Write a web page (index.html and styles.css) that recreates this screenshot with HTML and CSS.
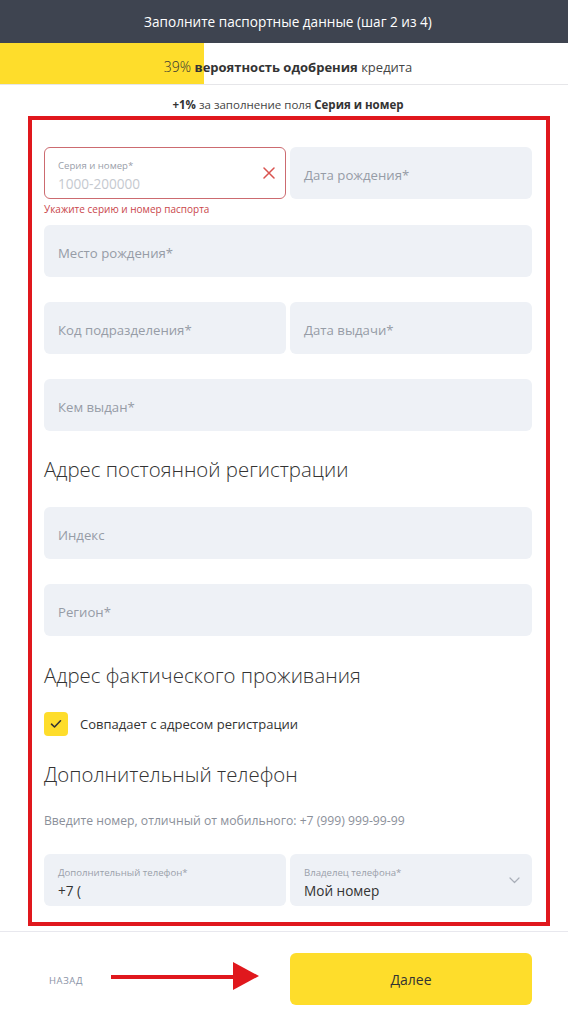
FILE: index.html
```html
<!DOCTYPE html>
<html lang="ru">
<head>
<meta charset="utf-8">
<title>Паспортные данные</title>
<link rel="stylesheet" href="styles.css">
</head>
<body>
<div class="page">
  <header class="topbar">Заполните паспортные данные (шаг 2 из 4)</header>

  <div class="progress">
    <div class="progress-fill" style="width:204px"></div>
    <span class="progress-text"><span class="pct">39%</span> <b>вероятность одобрения</b> кредита</span>
  </div>

  <p class="bonus"><b>+1%</b> за заполнение поля <b>Серия и номер</b></p>

  <div class="annot-box">
    <form class="form">
      <div class="group group--error">
        <div class="row2">
          <div class="field field--error field--stack">
            <span class="f-label">Серия и номер*</span>
            <span class="f-value f-value--ph">1000-200000</span>
            <svg class="clear-icon" width="12" height="12" viewBox="0 0 12 12"><path d="M1 1L11 11M11 1L1 11" stroke="#d9534f" stroke-width="1.5" stroke-linecap="round"/></svg>
          </div>
          <div class="field"><span class="ph">Дата рождения*</span></div>
        </div>
        <div class="error-text">Укажите серию и номер паспорта</div>
      </div>

      <div class="field field--full group"><span class="ph">Место рождения*</span></div>

      <div class="row2 group">
        <div class="field"><span class="ph">Код подразделения*</span></div>
        <div class="field"><span class="ph">Дата выдачи*</span></div>
      </div>

      <div class="field group group--before-h"><span class="ph">Кем выдан*</span></div>

      <h2 class="section-title">Адрес постоянной регистрации</h2>

      <div class="field group"><span class="ph">Индекс</span></div>
      <div class="field group"><span class="ph">Регион*</span></div>

      <h2 class="section-title section-title--tight">Адрес фактического проживания</h2>

      <label class="check-row">
        <span class="checkbox">
          <svg width="12" height="10" viewBox="0 0 12 10"><path d="M1.5 5.2L4.5 8L10.5 1.8" fill="none" stroke="#333" stroke-width="1.6" stroke-linecap="round" stroke-linejoin="round"/></svg>
        </span>
        <span class="check-label">Совпадает с адресом регистрации</span>
      </label>

      <h2 class="section-title">Дополнительный телефон</h2>

      <p class="hint">Введите номер, отличный от мобильного: +7 (999) 999-99-99</p>

      <div class="row2">
        <div class="field field--stack">
          <span class="f-label">Дополнительный телефон*</span>
          <span class="f-value">+7 (</span>
        </div>
        <div class="field field--stack">
          <span class="f-label">Владелец телефона*</span>
          <span class="f-value">Мой номер</span>
          <svg class="chevron" width="11" height="7" viewBox="0 0 11 7"><path d="M1 1L5.5 5.5L10 1" fill="none" stroke="#a9afb9" stroke-width="1.2" stroke-linecap="round" stroke-linejoin="round"/></svg>
        </div>
      </div>
    </form>
  </div>

  <footer class="footer">
    <div class="footer-left">
      <span class="back">НАЗАД</span>
      <svg class="arrow" width="148" height="28" viewBox="0 0 148 28"><rect x="0" y="13" width="126" height="4" fill="#e0181d"/><polygon points="122,0 148,14 122,28" fill="#e0181d"/></svg>
    </div>
    <button class="next" type="button">Далее</button>
  </footer>
</div>
</body>
</html>
```

FILE: styles.css
```css
html, body {
  margin: 0;
  padding: 0;
  overflow-x: hidden;
  background: #fff;
}

body {
  font-family: "Open Sans", "Noto Sans", "Liberation Sans", sans-serif;
  color: #333;
}

.page {
  width: 576px;
}

.topbar {
  height: 43px;
  line-height: 43px;
  background: #3e4450;
  color: #fff;
  text-align: center;
  font-size: 13.6px;
}

.progress {
  position: relative;
  height: 41px;
  border-bottom: 1px solid #e6e6e9;
  display: flex;
  align-items: center;
  justify-content: center;
}

.progress-fill {
  position: absolute;
  left: 0;
  top: 0;
  bottom: 0;
  background: #fedd2b;
}

.progress-text {
  position: relative;
  font-size: 13px;
  padding-top: 5px;
  color: #444;
}

.progress-text .pct {
  font-weight: 300;
  font-size: 14px;
  color: #333;
}

.progress-text b {
  font-weight: 700;
  color: #333;
}

.bonus {
  margin: 0 0 3px;
  padding-top: 12px;
  line-height: 16px;
  font-size: 11.5px;
  text-align: center;
  color: #444;
}

.bonus b {
  font-weight: 700;
  color: #333;
}

.annot-box {
  box-sizing: border-box;
  margin-left: 28px;
  width: 522px;
  border: 4px solid #e0181d;
  padding: 27px 14px 16px 12px;
}

.form {
  display: flex;
  flex-direction: column;
}

.group {
  margin-bottom: 25px;
}

.group--error {
  margin-bottom: 9px;
}

.group--before-h {
  margin-bottom: 24px;
}

.row2 {
  display: grid;
  grid-template-columns: 1fr 1fr;
  gap: 4px;
}

.field {
  position: relative;
  box-sizing: border-box;
  height: 52px;
  border-radius: 6px;
  background: #eef1f6;
  padding: 0 14px;
  display: flex;
  align-items: center;
}

.ph {
  font-size: 13.2px;
  color: #969ca6;
  padding-top: 4px;
}

.field--stack {
  flex-direction: column;
  align-items: flex-start;
  justify-content: flex-start;
  padding-top: 12px;
}

.field--error {
  background: #fff;
  border: 1px solid #cc6b70;
  padding-left: 13px;
  padding-top: 11px;
}

.f-label {
  font-size: 9.6px;
  line-height: 14px;
  color: #9aa0aa;
}

.f-value {
  font-size: 13.6px;
  line-height: 21px;
  color: #333;
}

.f-value--ph {
  color: #c5c9cf;
}

.clear-icon {
  position: absolute;
  right: 10px;
  top: 19px;
}

.chevron {
  position: absolute;
  right: 12px;
  top: 23px;
}

.error-text {
  margin-top: 4px;
  font-size: 10px;
  line-height: 13px;
  color: #c9464b;
}

.section-title {
  margin: 0 0 24px;
  font-size: 20.4px;
  line-height: 28px;
  font-weight: 300;
  color: #333;
}

.section-title--tight {
  margin-bottom: 23px;
}

.check-row {
  display: flex;
  align-items: center;
  height: 24px;
  margin-bottom: 24px;
}

.checkbox {
  width: 24px;
  height: 24px;
  border-radius: 4px;
  background: #fedd2b;
  display: flex;
  align-items: center;
  justify-content: center;
}

.check-label {
  margin-left: 12px;
  font-size: 13px;
  color: #333;
}

.hint {
  margin: 0 0 24px;
  font-size: 12.2px;
  line-height: 18px;
  color: #8b909a;
}

.footer {
  margin-top: 5px;
  border-top: 1px solid #e8e8ee;
  padding: 21px 44px 0;
  display: grid;
  grid-template-columns: 242px 242px;
  gap: 4px;
}

.footer-left {
  display: flex;
  align-items: center;
}

.back {
  margin-left: 5px;
  font-size: 9.5px;
  letter-spacing: 0.6px;
  color: #8a93a6;
  padding-top: 2px;
}

.arrow {
  margin-left: 28px;
  margin-bottom: 7px;
}

.next {
  height: 52px;
  border: 0;
  border-radius: 6px;
  background: #fedd2b;
  font-family: inherit;
  font-size: 14px;
  color: #333;
  padding: 0;
}
```
